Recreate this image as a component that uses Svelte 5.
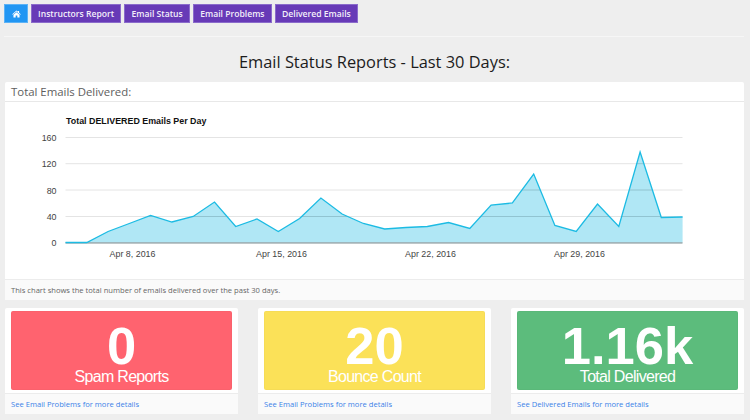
<script>
  const navLinks = ["Instructors Report", "Email Status", "Email Problems", "Delivered Emails"];

  // pixel height of each daily point inside the chart svg
  const series = [105, 105, 94, 86, 78, 84.5, 79, 64.5, 89, 81.5, 94, 81, 60.5, 76.5, 86, 91.5, 90, 89, 85, 91, 67.5, 65.5, 36.5, 88, 94, 66.5, 89, 14.5, 80, 79.5];
  const stepX = 21.28;
  const points = series.map((y, i) => `${(i * stepX).toFixed(1)},${y}`).join(" ");
  const areaPoints = `0,105 ${points} ${(29 * stepX).toFixed(1)},105`;

  const yTicks = [
    { label: "160", y: 0 },
    { label: "120", y: 26.2 },
    { label: "80", y: 52.5 },
    { label: "40", y: 79 },
    { label: "0", y: 105 }
  ];
  const xTicks = [
    { label: "Apr 8, 2016", x: 67 },
    { label: "Apr 15, 2016", x: 216 },
    { label: "Apr 22, 2016", x: 365 },
    { label: "Apr 29, 2016", x: 514 }
  ];

  const stats = [
    { value: "0", label: "Spam Reports", link: "See Email Problems for more details", tone: "red" },
    { value: "20", label: "Bounce Count", link: "See Email Problems for more details", tone: "yellow" },
    { value: "1.16k", label: "Total Delivered", link: "See Delivered Emails for more details", tone: "green" }
  ];
</script>

<div class="page">
  <nav class="nav">
    <a class="btn home" href="#home" aria-label="Home">
      <svg viewBox="0 0 16 14" aria-hidden="true">
        <path d="M8 0.6 L10.6 2.9 V1.6 H12.6 V4.7 L15.6 7.3 L14.7 8.3 L8 2.5 L1.3 8.3 L0.4 7.3 Z M8 3.9 L13.4 8.5 V13.4 H9.5 V9.7 H6.5 V13.4 H2.6 V8.5 Z" />
      </svg>
    </a>
    {#each navLinks as link}
      <a class="btn" href="#report">{link}</a>
    {/each}
  </nav>

  <hr />

  <h1>Email Status Reports - Last 30 Days:</h1>

  <section class="panel">
    <header>Total Emails Delivered:</header>
    <div class="chart">
      <svg width="738" height="177" viewBox="0 0 738 177">
        <defs>
          <clipPath id="area-clip">
            <polygon points={areaPoints} />
          </clipPath>
        </defs>
        <text class="chart-title" x="61" y="22">Total DELIVERED Emails Per Day</text>
        <g transform="translate(60.5 35.5)">
          {#each yTicks as tick}
            <line class="grid" x1="0" x2="617" y1={tick.y} y2={tick.y} />
            <text class="tick" x="-9" y={tick.y + 3.5} text-anchor="end">{tick.label}</text>
          {/each}
          <polygon class="area" points={areaPoints} />
          <g clip-path="url(#area-clip)">
            {#each yTicks.slice(1, 4) as tick}
              <line class="grid-over" x1="0" x2="617" y1={tick.y} y2={tick.y} />
            {/each}
          </g>
          <line class="base" x1="0" x2="617" y1="105.5" y2="105.5" />
          <polyline class="line" points={points} />
          {#each xTicks as tick}
            <text class="tick" x={tick.x} y="119" text-anchor="middle">{tick.label}</text>
          {/each}
        </g>
      </svg>
    </div>
    <footer>This chart shows the total number of emails delivered over the past 30 days.</footer>
  </section>

  <div class="stats">
    {#each stats as stat}
      <section class="card">
        <div class="tile {stat.tone}">
          <div class="value">{stat.value}</div>
          <div class="label">{stat.label}</div>
        </div>
        <a class="more" href="#details">{stat.link}</a>
      </section>
    {/each}
  </div>
</div>

<style>
  :global(body) {
    background: #eeeeee;
    overflow: hidden;
  }

  .page {
    width: 750px;
    height: 420px;
    box-sizing: border-box;
    padding: 4px 6px 0 5px;
    font-family: "Open Sans", sans-serif;
  }

  .nav {
    display: flex;
    gap: 2.7px;
    margin-left: -1px;
  }

  .btn {
    display: flex;
    align-items: center;
    justify-content: center;
    box-sizing: border-box;
    height: 19px;
    padding: 0 6.4px;
    background: #673ab7;
    border: 1px solid #8a6bcb;
    color: #f3effa;
    font-size: 8.6px;
    font-weight: 600;
    text-decoration: none;
    white-space: nowrap;
  }

  .home {
    width: 24px;
    padding: 0;
    background: #2196f3;
    border-color: #5bb2f6;
  }

  .home svg {
    width: 9px;
    height: 8px;
    fill: #ffffff;
  }

  hr {
    height: 1px;
    margin: 13px 0 0 -1px;
    border: 0;
    background: #f6f6f6;
  }

  h1 {
    margin: 15px 0 10px;
    color: #1c1c1c;
    font-size: 16.4px;
    font-weight: 400;
    line-height: 20px;
    text-align: center;
  }

  .panel {
    display: flex;
    flex-direction: column;
    height: 218px;
    background: #ffffff;
    border-radius: 2px;
  }

  .panel header {
    height: 20px;
    box-sizing: border-box;
    padding-left: 6px;
    color: #5e5e5e;
    font-size: 11.4px;
    line-height: 19px;
    border-bottom: 1px solid #e8e8e8;
    flex: none;
  }

  .chart {
    flex: 1;
    overflow: hidden;
  }

  .chart svg {
    display: block;
  }

  .chart-title {
    fill: #111111;
    font-family: "Liberation Sans", Arial, sans-serif;
    font-size: 8.9px;
    font-weight: 700;
  }

  .tick {
    fill: #444444;
    font-family: "Liberation Sans", Arial, sans-serif;
    font-size: 8.9px;
  }

  .grid {
    stroke: #e4e4e4;
    stroke-width: 1;
  }

  .area {
    fill: #1cbbe3;
    fill-opacity: 0.35;
  }

  .grid-over {
    stroke: #000000;
    stroke-opacity: 0.08;
    stroke-width: 1;
  }

  .base {
    stroke: #7d8e92;
    stroke-width: 1;
  }

  .line {
    fill: none;
    stroke: #1cbbe3;
    stroke-width: 1.3;
  }

  .panel footer {
    height: 21px;
    box-sizing: border-box;
    padding-left: 6px;
    background: #fafafa;
    border-top: 1px solid #ececec;
    color: #666666;
    font-size: 7.6px;
    line-height: 20px;
    flex: none;
  }

  .stats {
    display: grid;
    grid-template-columns: repeat(3, 1fr);
    gap: 20px;
    margin-top: 8px;
  }

  .card {
    height: 106px;
    box-sizing: border-box;
    padding-top: 3px;
    background: #ffffff;
    border-radius: 2px;
  }

  .tile {
    height: 78.5px;
    margin: 0 6.3px;
    border-radius: 2px;
    box-shadow: inset 0 0 0 1px rgba(0, 0, 0, 0.02);
    color: #ffffff;
    font-family: "Liberation Sans", Arial, sans-serif;
    text-align: center;
  }

  .red {
    background: #ff636f;
  }

  .yellow {
    background: #fbe158;
  }

  .green {
    background: #5cbc7c;
  }

  .value {
    padding-top: 14px;
    font-size: 52.5px;
    font-weight: 700;
    line-height: 42px;
  }

  .label {
    font-size: 16px;
    line-height: 20px;
    letter-spacing: -0.7px;
  }

  .more {
    display: block;
    height: 21px;
    box-sizing: border-box;
    margin-top: 3.5px;
    padding-left: 6px;
    background: #fafafa;
    border-top: 1px solid #ececec;
    color: #3b82e8;
    font-size: 7.6px;
    line-height: 20px;
    text-decoration: none;
  }
</style>
